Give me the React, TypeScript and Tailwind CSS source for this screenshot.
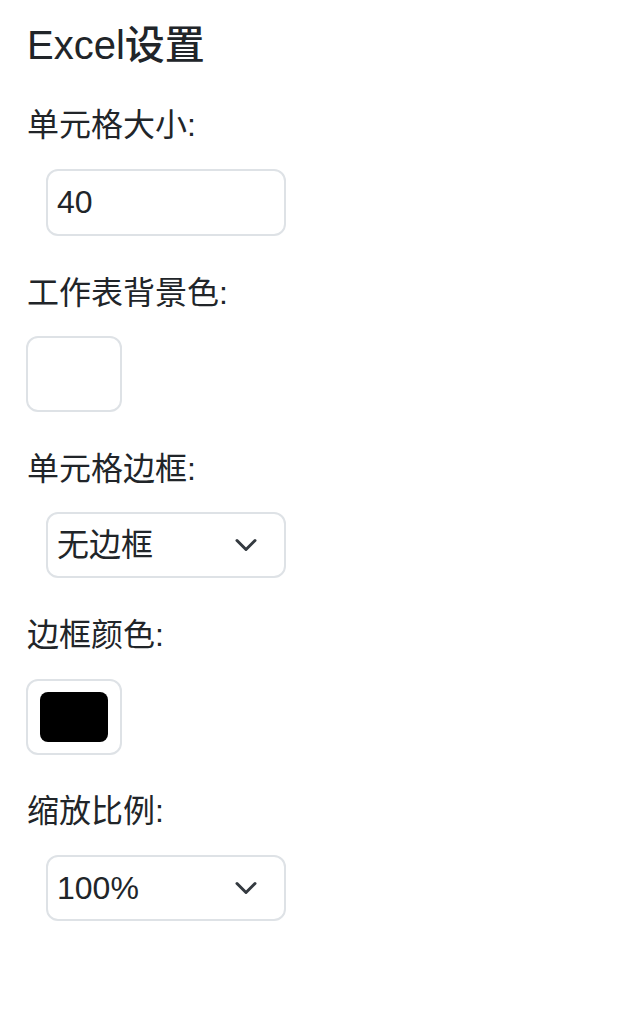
import React from "react";

const font = '"Liberation Sans", "Noto Sans CJK SC", Arial, sans-serif';

function Label({ children }: { children: React.ReactNode }) {
  return (
    <div className="flex h-12 items-center text-[32px] leading-[48px] text-[#212529]">
      {children}
    </div>
  );
}

function Chevron() {
  return (
    <svg
      className="pointer-events-none absolute right-[28px] top-1/2 -translate-y-1/2"
      width="24"
      height="24"
      viewBox="0 0 16 16"
      fill="none"
      stroke="#343a40"
      strokeWidth="2"
      strokeLinecap="round"
      strokeLinejoin="round"
    >
      <path d="m2 5 6 6 6-6" />
    </svg>
  );
}

function SelectBox({ options, value }: { options: string[]; value: string }) {
  return (
    <div className="relative ml-[20px] h-[66px] w-[240px]">
      <select
        defaultValue={value}
        className="h-full w-full appearance-none rounded-[12px] border-2 border-[#dee2e6] bg-white pl-[9px] pr-[60px] text-[32px] text-[#212529] outline-none"
      >
        {options.map((o) => (
          <option key={o} value={o}>
            {o}
          </option>
        ))}
      </select>
      <Chevron />
    </div>
  );
}

function ColorBox({ color }: { color: string }) {
  return (
    <div className="flex h-[76px] w-[96px] rounded-[12px] border-2 border-[#dee2e6] bg-white px-[12px] py-[11px]">
      <div className="h-full w-full rounded-[8px]" style={{ backgroundColor: color }} />
    </div>
  );
}

export default function App() {
  return (
    <div className="min-h-[1010px] bg-white pl-[27px] pt-[21px]" style={{ fontFamily: font }}>
      <div className="h-12 text-[40px] font-medium leading-[48px] text-[#212529]">Excel设置</div>

      <div className="mt-[32px]">
        <Label>单元格大小:</Label>
        <input
          readOnly
          value="40"
          className="ml-[19px] mt-[20px] block h-[67px] w-[240px] rounded-[12px] border-2 border-[#dee2e6] bg-white pl-[9px] text-[32px] text-[#212529] outline-none"
        />
      </div>

      <div className="mt-[33px] -ml-px">
        <Label>
          <span className="ml-px">工作表背景色:</span>
        </Label>
        <div className="mt-[19px]">
          <ColorBox color="#ffffff" />
        </div>
      </div>

      <div className="mt-[33px]">
        <Label>单元格边框:</Label>
        <div className="mt-[19px] -ml-px">
          <SelectBox options={["无边框", "细边框", "粗边框"]} value="无边框" />
        </div>
      </div>

      <div className="mt-[33px] -ml-px">
        <Label>
          <span className="ml-px">边框颜色:</span>
        </Label>
        <div className="mt-[20px]">
          <ColorBox color="#000000" />
        </div>
      </div>

      <div className="mt-[32px]">
        <Label>缩放比例:</Label>
        <div className="mt-[20px] -ml-px">
          <SelectBox options={["50%", "75%", "100%", "125%", "150%"]} value="100%" />
        </div>
      </div>
    </div>
  );
}
